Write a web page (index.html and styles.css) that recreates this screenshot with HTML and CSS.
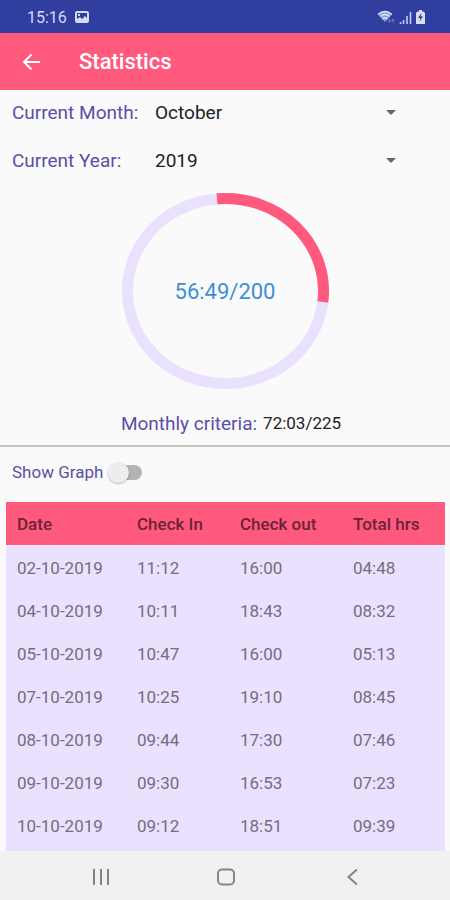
FILE: index.html
```html
<!DOCTYPE html>
<html lang="en">
<head>
<meta charset="utf-8">
<meta name="viewport" content="width=device-width, initial-scale=1">
<title>Statistics</title>
<link rel="stylesheet" href="styles.css">
</head>
<body>
<div class="status">
  <div class="status-group">
    <span>15:16</span>
    <svg width="14" height="12" viewBox="0 0 14 12"><rect width="14" height="12" rx="2" fill="#d3dafa"/><path d="M2 2h10v5l-2-2-3 3-2-2-3 2z" fill="#303f9f"/><path d="M3 3h2v2H3z" fill="#d3dafa"/></svg>
  </div>
  <div class="status-group status-icons">
    <svg width="18" height="14" viewBox="0 0 18 14"><path d="M1 4.500Q8 -1.500 15 4.500L8 12z" fill="#8f9bd8"/><path d="M1 4.500Q8 -1.500 15 4.500M3.500 6.500Q8 2.500 12.500 6.500M5.500 9Q8 6.500 10.500 9" fill="none" stroke="#dfe5fb" stroke-width="1.300"/><path d="M12.500 9v3M11.300 10.800l1.200 1.400 1.200-1.400M16 12.500v-3M14.800 10.500L16 9.200l1.200 1.300" fill="none" stroke="#8794d3" stroke-width=".8"/></svg>
    <svg width="13" height="13" viewBox="0 0 13 13"><path d="M1.500 13v-2M4.500 13V9M8 13V5M11.500 13V1" stroke="#c3ccf2" stroke-width="1.600"/></svg>
    <svg width="9" height="14" viewBox="0 0 9 14"><path d="M3 0h3v1.500h1.500L9 3v11H0V3l1.500-1.500H3z" fill="#d5def0"/><path d="M5.500 3L2 8h2.200L3.500 11.500 7 6.500H4.800z" fill="#37454f"/></svg>
  </div>
</div>
<header class="appbar">
  <button class="back" aria-label="Back"><svg width="18" height="18" viewBox="0 0 18 18"><path d="M18 9H2M9.500 1.500L2 9l7.500 7.500" fill="none" stroke="#fff" stroke-width="2"/></svg></button>
  <h1>Statistics</h1>
</header>
<main>
  <form class="filters">
    <label for="month">Current Month:</label>
    <div class="picker"><select id="month"><option>October</option></select><svg width="10" height="5" viewBox="0 0 10 5"><path d="M0 0h10L5 5z" fill="#666"/></svg></div>
    <label for="year">Current Year:</label>
    <div class="picker"><select id="year"><option>2019</option></select><svg width="10" height="5" viewBox="0 0 10 5"><path d="M0 0h10L5 5z" fill="#666"/></svg></div>
  </form>
  <div class="ring">
    <svg width="208" height="196" viewBox="0 0 208 196" fill="none" stroke-width="11"><ellipse cx="104.500" cy="98" rx="98" ry="92.500" stroke="#e9e1fd"/><path d="M96 5.850A98 92.500 0 0 1 201.800 109" stroke="#ff5a7e"/></svg>
    <span class="ring-value">56:49/200</span>
  </div>
  <p class="criteria"><span class="criteria-label">Monthly criteria:</span> <span>72:03/225</span></p>
  <div class="graph">
    <label for="graph">Show Graph</label>
    <input type="checkbox" role="switch" id="graph" class="switch">
  </div>
  <div class="sheet">
    <table>
      <colgroup><col class="c-date"><col class="c-in"><col class="c-out"><col></colgroup>
      <thead><tr><th>Date</th><th>Check In</th><th>Check out</th><th>Total hrs</th></tr></thead>
      <tbody>
        <tr><td>02-10-2019</td><td>11:12</td><td>16:00</td><td>04:48</td></tr>
        <tr><td>04-10-2019</td><td>10:11</td><td>18:43</td><td>08:32</td></tr>
        <tr><td>05-10-2019</td><td>10:47</td><td>16:00</td><td>05:13</td></tr>
        <tr><td>07-10-2019</td><td>10:25</td><td>19:10</td><td>08:45</td></tr>
        <tr><td>08-10-2019</td><td>09:44</td><td>17:30</td><td>07:46</td></tr>
        <tr><td>09-10-2019</td><td>09:30</td><td>16:53</td><td>07:23</td></tr>
        <tr><td>10-10-2019</td><td>09:12</td><td>18:51</td><td>09:39</td></tr>
      </tbody>
    </table>
  </div>
</main>
<nav class="navbar">
  <button aria-label="Recent apps"><svg width="18" height="18" viewBox="0 0 18 18"><path d="M2 1v16M9 1v16M16 1v16" stroke="#858585" stroke-width="2"/></svg></button>
  <button aria-label="Home"><svg width="18" height="18" viewBox="0 0 18 18"><rect x="1" y="1.500" width="16" height="15" rx="4" fill="none" stroke="#858585" stroke-width="2"/></svg></button>
  <button aria-label="Back"><svg width="18" height="18" viewBox="0 0 18 18"><path d="M14 1.500L5.500 9l8.500 7.500" fill="none" stroke="#858585" stroke-width="2"/></svg></button>
</nav>
</body>
</html>
```
FILE: styles.css
```css
* { box-sizing: border-box; }
body {
  margin: 0;
  min-height: 100vh;
  display: flex;
  flex-direction: column;
  background: #fafafa;
  color: #222;
  font-family: Roboto, sans-serif;
  font-size: 19px;
}
button { border: 0; padding: 0; background: none; display: flex; }
svg { display: block; flex: none; }

.status {
  height: 33px;
  padding: 1px 25px 0 27px;
  display: flex;
  align-items: center;
  justify-content: space-between;
  background: #303f9f;
  color: #d3dafa;
  font-size: 16px;
}
.status-group { display: flex; align-items: center; gap: 8px; }
.status-icons { gap: 4px; }

.appbar {
  height: 57px;
  padding: 0 22px;
  display: flex;
  align-items: center;
  gap: 39px;
  background: #ff5a7e;
  color: #fff;
}
.appbar h1 { margin: 0; font-size: 22px; font-weight: 500; }

main { flex: 1; display: flex; flex-direction: column; }

.filters {
  padding: 0 44px 0 12px;
  display: grid;
  grid-template-columns: 143px 1fr;
  grid-auto-rows: 44px;
  row-gap: 4px;
  align-items: center;
}
.filters label, .graph label, .criteria-label { color: #5a4fa8; }
.picker { display: grid; align-items: center; }
.picker select, .picker svg { grid-area: 1 / 1; }
.picker svg { justify-self: end; margin-right: 10px; pointer-events: none; }
select {
  appearance: none;
  width: 100%;
  height: 44px;
  padding: 0;
  border: 0;
  background: none;
  color: #222;
  font: inherit;
}

.ring { margin-top: 11px; display: grid; place-items: center; }
.ring > * { grid-area: 1 / 1; }
.ring-value { color: #3d8fd6; font-size: 22px; }

.criteria {
  margin: 0;
  padding: 12px 0 0 12px;
  height: 58px;
  display: flex;
  justify-content: center;
  align-items: center;
  gap: 6px;
  border-bottom: 2px solid #c3c5c5;
  font-size: 17px;
}
.criteria-label { font-size: 19px; }

.graph {
  height: 55px;
  padding: 0 12px 5px;
  display: flex;
  align-items: center;
  gap: 6px;
  font-size: 17px;
}
.switch {
  appearance: none;
  width: 33px;
  height: 15px;
  margin: 0;
  display: flex;
  align-items: center;
  background: #b3b3b3;
  border-radius: 8px;
}
.switch::before {
  content: "";
  width: 21px;
  height: 21px;
  margin: 0 -1px;
  border-radius: 50%;
  background: #ededed;
  box-shadow: 0 1px 2px #0004;
}
.switch:checked { justify-content: flex-end; }

.sheet { flex: 1; margin: 0 5px 0 6px; background: #e9e1fd; }
table { width: 100%; border-spacing: 0; table-layout: fixed; }
.c-date { width: 120px; }
.c-in { width: 103px; }
.c-out { width: 113px; }
th, td {
  height: 43px;
  padding: 0 0 0 11px;
  text-align: left;
  font-size: 17px;
  color: #756d80;
}
th { background: #ff5a7e; color: #6b2338; font-weight: 500; }
tbody tr:first-child td { height: 44px; border-top: 1px solid #f0e9fd; }

.navbar {
  height: 49px;
  padding: 2px 35px 0 38px;
  display: flex;
  align-items: center;
  justify-content: space-around;
  background: #f1f1f1;
}
```
